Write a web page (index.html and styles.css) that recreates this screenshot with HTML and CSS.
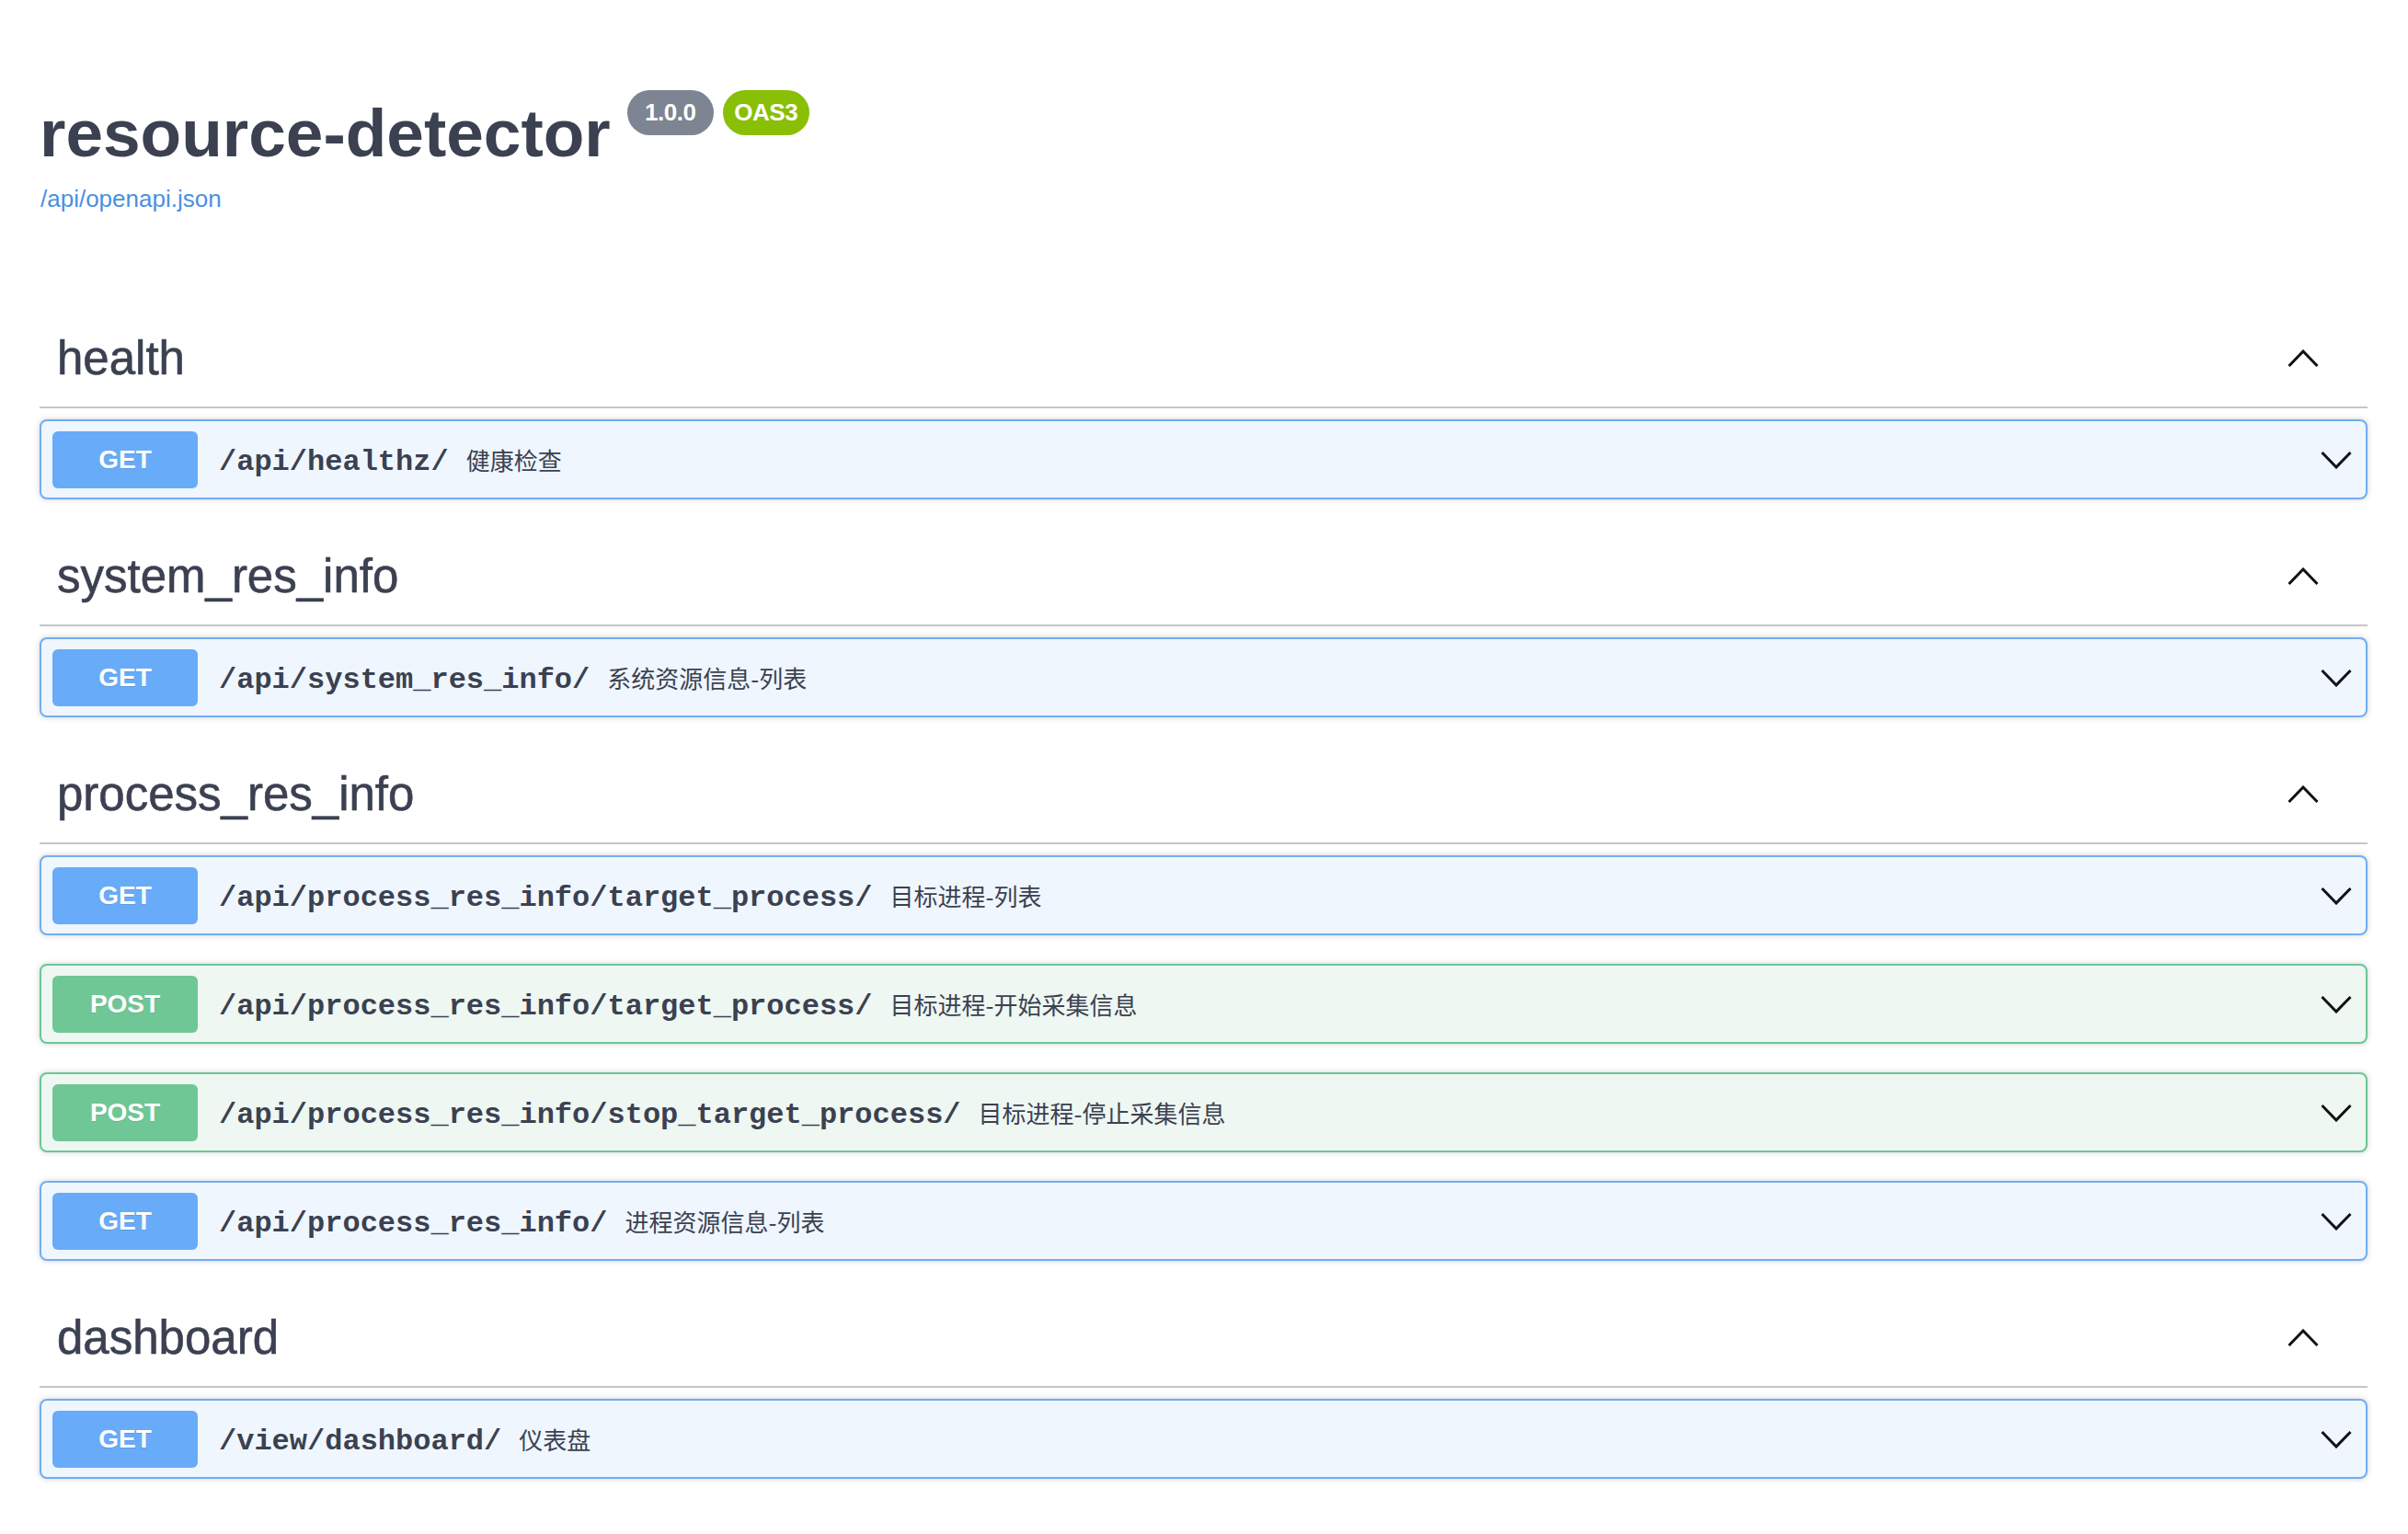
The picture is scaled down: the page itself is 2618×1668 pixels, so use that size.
FILE: index.html
```html
<!DOCTYPE html>
<html lang="zh">
<head>
<meta charset="utf-8">
<title>resource-detector</title>
<link rel="stylesheet" href="styles.css">
</head>
<body>
<div class="page">
  <div class="info">
    <div class="title-row">
      <h2 class="title">resource-detector</h2>
      <div class="badges">
        <span class="badge badge-version">1.0.0</span>
        <span class="badge badge-oas">OAS3</span>
      </div>
    </div>
    <a class="spec-link" href="#">/api/openapi.json</a>
  </div>

  <div class="sections">
    <section class="tag-section">
      <div class="tag">
        <span class="tag-name">health</span>
        <svg class="chev" width="34" height="20" viewBox="0 0 34 20"><polyline points="1.5,18 17,2 32.5,18" /></svg>
      </div>
      <div class="op op-get">
        <span class="method">GET</span>
        <span class="path">/api/healthz/</span>
        <span class="desc">健康检查</span>
        <svg class="chev" width="34" height="20" viewBox="0 0 34 20"><polyline points="1.5,2 17,18 32.5,2" /></svg>
      </div>
    </section>

    <section class="tag-section">
      <div class="tag">
        <span class="tag-name">system_res_info</span>
        <svg class="chev" width="34" height="20" viewBox="0 0 34 20"><polyline points="1.5,18 17,2 32.5,18" /></svg>
      </div>
      <div class="op op-get">
        <span class="method">GET</span>
        <span class="path">/api/system_res_info/</span>
        <span class="desc">系统资源信息-列表</span>
        <svg class="chev" width="34" height="20" viewBox="0 0 34 20"><polyline points="1.5,2 17,18 32.5,2" /></svg>
      </div>
    </section>

    <section class="tag-section">
      <div class="tag">
        <span class="tag-name">process_res_info</span>
        <svg class="chev" width="34" height="20" viewBox="0 0 34 20"><polyline points="1.5,18 17,2 32.5,18" /></svg>
      </div>
      <div class="op op-get">
        <span class="method">GET</span>
        <span class="path">/api/process_res_info/target_process/</span>
        <span class="desc">目标进程-列表</span>
        <svg class="chev" width="34" height="20" viewBox="0 0 34 20"><polyline points="1.5,2 17,18 32.5,2" /></svg>
      </div>
      <div class="op op-post">
        <span class="method">POST</span>
        <span class="path">/api/process_res_info/target_process/</span>
        <span class="desc">目标进程-开始采集信息</span>
        <svg class="chev" width="34" height="20" viewBox="0 0 34 20"><polyline points="1.5,2 17,18 32.5,2" /></svg>
      </div>
      <div class="op op-post">
        <span class="method">POST</span>
        <span class="path">/api/process_res_info/stop_target_process/</span>
        <span class="desc">目标进程-停止采集信息</span>
        <svg class="chev" width="34" height="20" viewBox="0 0 34 20"><polyline points="1.5,2 17,18 32.5,2" /></svg>
      </div>
      <div class="op op-get">
        <span class="method">GET</span>
        <span class="path">/api/process_res_info/</span>
        <span class="desc">进程资源信息-列表</span>
        <svg class="chev" width="34" height="20" viewBox="0 0 34 20"><polyline points="1.5,2 17,18 32.5,2" /></svg>
      </div>
    </section>

    <section class="tag-section">
      <div class="tag">
        <span class="tag-name">dashboard</span>
        <svg class="chev" width="34" height="20" viewBox="0 0 34 20"><polyline points="1.5,18 17,2 32.5,18" /></svg>
      </div>
      <div class="op op-get">
        <span class="method">GET</span>
        <span class="path">/view/dashboard/</span>
        <span class="desc">仪表盘</span>
        <svg class="chev" width="34" height="20" viewBox="0 0 34 20"><polyline points="1.5,2 17,18 32.5,2" /></svg>
      </div>
    </section>
  </div>
</div>
</body>
</html>
```

FILE: styles.css
```css
html, body {
  margin: 0;
  padding: 0;
  background: #ffffff;
}

body {
  font-family: "Liberation Sans", Arial, sans-serif;
  color: #3b4151;
}

.page {
  padding: 98px 44px 0 43px;
}

.title-row {
  display: flex;
  align-items: flex-start;
}

.title {
  margin: 6px 0 0 0;
  font-size: 73px;
  line-height: 82px;
  font-weight: 700;
  color: #3b4151;
}

.badges {
  display: flex;
  gap: 10px;
  margin-left: 18px;
}

.badge {
  display: flex;
  align-items: center;
  justify-content: center;
  width: 94px;
  height: 49px;
  border-radius: 25px;
  color: #ffffff;
  font-size: 26px;
  font-weight: 700;
  letter-spacing: -0.5px;
}

.badge-version {
  background: #7d8492;
}

.badge-oas {
  background: #89bf04;
}

.spec-link {
  display: block;
  margin-top: 15px;
  padding-left: 1px;
  font-size: 26px;
  line-height: 30px;
  color: #4990e2;
  text-decoration: none;
}

.sections {
  margin-top: 106px;
}

.tag {
  display: flex;
  align-items: center;
  justify-content: space-between;
  height: 107px;
  box-sizing: border-box;
  border-bottom: 2px solid rgba(59, 65, 81, 0.3);
  padding: 0 53px 0 19px;
  margin-bottom: 12px;
}

.tag-name {
  font-size: 51px;
  font-weight: 400;
  color: #3b4151;
  -webkit-text-stroke: 0.6px #3b4151;
}

.chev {
  flex-shrink: 0;
  fill: none;
  stroke: #111111;
  stroke-width: 3;
  stroke-linecap: butt;
  stroke-linejoin: miter;
}

.op {
  display: flex;
  align-items: center;
  height: 87px;
  box-sizing: border-box;
  border: 2px solid;
  border-radius: 8px;
  padding: 0 15px 0 12px;
  margin-bottom: 31px;
  box-shadow: 0 0 6px rgba(0, 0, 0, 0.19);
}

.op-get {
  border-color: #72aef2;
  background: #eff6fe;
}

.op-post {
  border-color: #6cc795;
  background: #eef7f2;
}

.method {
  flex-shrink: 0;
  display: flex;
  align-items: center;
  justify-content: center;
  width: 158px;
  height: 62px;
  border-radius: 6px;
  color: #ffffff;
  font-size: 28px;
  font-weight: 700;
  text-shadow: 0 1px 0 rgba(0, 0, 0, 0.1);
}

.op-get .method {
  background: #68abf8;
}

.op-post .method {
  background: #6ec795;
}

.path {
  font-family: "Liberation Mono", "Courier New", monospace;
  font-weight: 700;
  font-size: 32px;
  color: #3b4151;
  padding: 5px 19px 0 23px;
  white-space: nowrap;
}

.desc {
  flex: 1;
  font-family: "Noto Sans CJK SC", "Noto Sans", sans-serif;
  font-size: 26px;
  color: #3b4151;
}
```
